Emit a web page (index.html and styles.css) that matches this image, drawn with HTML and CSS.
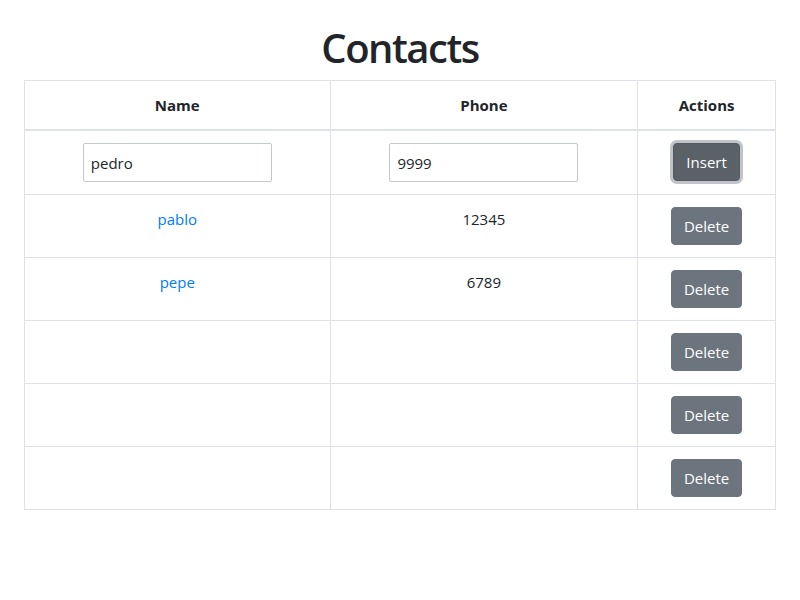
FILE: index.html
```html
<!DOCTYPE html>
<html>
<head>
<meta charset="utf-8">
<link rel="stylesheet" href="styles.css">
</head>
<body>
<div class="page">
  <h1 class="title">Contacts</h1>
  <table class="contacts">
    <colgroup>
      <col class="c-name">
      <col class="c-phone">
      <col class="c-actions">
    </colgroup>
    <thead>
      <tr><th>Name</th><th>Phone</th><th>Actions</th></tr>
    </thead>
    <tbody>
      <tr>
        <td><input class="field" type="text" value="pedro"></td>
        <td><input class="field" type="text" value="9999"></td>
        <td><button class="btn btn-focus">Insert</button></td>
      </tr>
      <tr>
        <td><a class="link" href="#">pablo</a></td>
        <td>12345</td>
        <td><button class="btn">Delete</button></td>
      </tr>
      <tr>
        <td><a class="link" href="#">pepe</a></td>
        <td>6789</td>
        <td><button class="btn">Delete</button></td>
      </tr>
      <tr><td></td><td></td><td><button class="btn">Delete</button></td></tr>
      <tr><td></td><td></td><td><button class="btn">Delete</button></td></tr>
      <tr><td></td><td></td><td><button class="btn">Delete</button></td></tr>
    </tbody>
  </table>
</div>
</body>
</html>
```
FILE: styles.css
```css
html, body {
  margin: 0;
  padding: 0;
  background: #fff;
}
body {
  font-family: "Open Sans", "Noto Sans", sans-serif;
  font-size: 16px;
  line-height: 1.5;
  color: #212529;
}
.page {
  padding: 24px;
}
.title {
  margin: 0 0 8px;
  font-size: 40px;
  font-weight: 600;
  line-height: 48px;
  text-align: center;
  letter-spacing: -1.5px;
}
.contacts {
  width: 752px;
  border-collapse: collapse;
  border: 1px solid #dee2e6;
}
.c-name { width: 306px; }
.c-phone { width: 308px; }
.c-actions { width: 138px; }
.contacts th,
.contacts td {
  border: 1px solid #dee2e6;
  padding: 12px;
  text-align: center;
  vertical-align: top;
  font-size: 15px;
  line-height: 24px;
}
.contacts th {
  font-weight: 700;
  border-bottom: 2px solid #dee2e6;
}
.contacts tbody td {
  height: 38px;
}
.field {
  box-sizing: border-box;
  width: 189px;
  height: 39px;
  padding: 6px 7px;
  border: 1px solid #c4c8cc;
  border-radius: 2px;
  font-family: inherit;
  font-size: 15px;
  color: #212529;
  background: #fff;
}
.link {
  color: #007bff;
  text-decoration: none;
}
.btn {
  font-family: inherit;
  font-size: 15px;
  line-height: 24px;
  padding: 6px 12px;
  color: #fff;
  background: #6c757d;
  border: 1px solid #6c757d;
  border-radius: 4px;
  cursor: pointer;
}
.btn-focus {
  background: #5a6268;
  border-color: #545b62;
  box-shadow: 0 0 0 3px rgba(130, 138, 145, 0.5);
}
```
